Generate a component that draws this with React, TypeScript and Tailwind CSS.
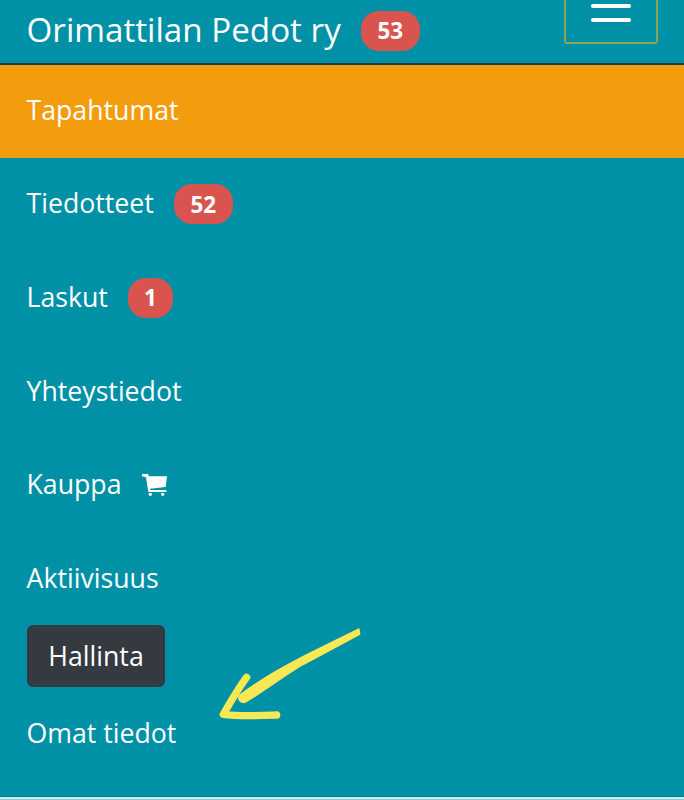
const font = { fontFamily: '"Open Sans", "Noto Sans", sans-serif' };

function Badge({ children, wide = true }: { children: React.ReactNode; wide?: boolean }) {
  return (
    <span
      className={`ml-[20px] mt-[2px] inline-flex h-[40px] items-center justify-center rounded-[18px] bg-[#d9534f] text-[22.5px] font-bold text-white ${
        wide ? "w-[59px]" : "w-[45px]"
      }`}
    >
      {children}
    </span>
  );
}

function NavItem({ children, active, first }: { children: React.ReactNode; active?: boolean; first?: boolean }) {
  return (
    <div
      className={`flex items-center pb-[2px] pl-[26.5px] text-[26.7px] text-white ${first ? "h-[92.6px]" : "h-[93.6px]"} ${
        active ? "bg-[#f39c0d]" : ""
      }`}
    >
      {children}
    </div>
  );
}

export default function App() {
  return (
    <div className="relative flex h-[800px] w-[684px] flex-col overflow-hidden bg-[#0091a7]" style={font}>
      {/* Navbar */}
      <div className="flex h-[65px] shrink-0 items-center justify-between border-b-2 border-[#1d3b40] pl-[26.5px] pr-[26px]">
        <div className="flex items-center pb-[3px] text-[33.2px] text-white">
          Orimattilan Pedot ry
          <Badge>53</Badge>
        </div>
        <div className="mt-[-40px] flex h-[64px] w-[94px] flex-col items-center justify-end gap-[10px] rounded-[3px] border-2 border-[#8fa058] pb-[20px]">
          <span className="h-[4px] w-[40px] rounded-full bg-white" />
          <span className="h-[4px] w-[40px] rounded-full bg-white" />
        </div>
      </div>

      <NavItem active first>
        Tapahtumat
      </NavItem>
      <NavItem>
        Tiedotteet
        <Badge>52</Badge>
      </NavItem>
      <NavItem>
        Laskut
        <Badge wide={false}>1</Badge>
      </NavItem>
      <NavItem>Yhteystiedot</NavItem>
      <NavItem>
        Kauppa
        <svg className="ml-[20px] mt-[2px] h-[22px] w-[26px]" viewBox="60 42 78 66" fill="white">
          <path d="M60 42h18l3 7h54l-4 32-47 5 1 4h48v6H79l-7-44-12-3z" />
          <circle cx="85" cy="103" r="5" />
          <circle cx="122" cy="103" r="5" />
        </svg>
      </NavItem>
      <NavItem>Aktiivisuus</NavItem>

      <div className="mt-[-1px] pl-[27px]">
        <button className="h-[62px] w-[138px] rounded-[6px] bg-[#343a40] text-[26.7px] text-white">Hallinta</button>
      </div>

      <div className="flex h-[94px] items-center pb-[2px] pl-[26.5px] text-[26.7px] text-white">Omat tiedot</div>

      <div className="mt-auto h-[4px] border-t border-[#0a7d8e] border-b border-b-[#7fd0da] bg-[#c9eef2]" />

      {/* Hand drawn arrow */}
      <svg
        className="absolute left-[200px] top-[620px] h-[110px] w-[170px]"
        viewBox="0 0 510 330"
        fill="none"
        stroke="#f8e954"
        strokeLinecap="round"
        strokeLinejoin="round"
      >
        <path
          d="M476 28 C420 56 360 85 295 118 C250 142 190 172 118 228 C114 242 125 248 135 246 C190 214 250 167 310 132 C370 100 425 70 478 42 Z"
          fill="#f8e954"
          strokeWidth="6"
        />
        <path d="M140 172 C115 205 95 240 70 283 C120 290 180 287 230 285" strokeWidth="22" />
      </svg>
    </div>
  );
}
